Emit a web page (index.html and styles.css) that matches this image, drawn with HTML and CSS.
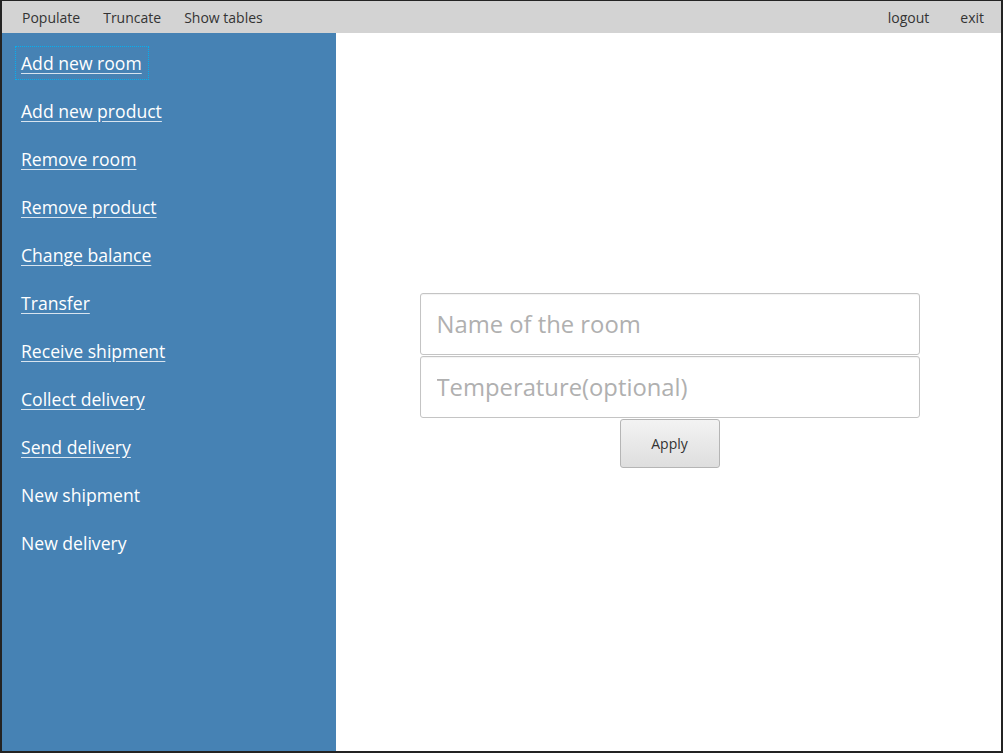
FILE: index.html
```html
<!DOCTYPE html>
<html>
<head>
<meta charset="utf-8">
<link rel="stylesheet" href="styles.css">
</head>
<body>
<div class="window">
  <div class="topbar">
    <div class="menu-left">
      <span class="menu-item">Populate</span>
      <span class="menu-item">Truncate</span>
      <span class="menu-item">Show tables</span>
    </div>
    <div class="menu-right">
      <span class="menu-item">logout</span>
      <span class="menu-item">exit</span>
    </div>
  </div>
  <div class="main">
    <nav class="sidebar">
      <a class="link focused">Add new room</a>
      <a class="link">Add new product</a>
      <a class="link">Remove room</a>
      <a class="link">Remove product</a>
      <a class="link">Change balance</a>
      <a class="link">Transfer</a>
      <a class="link">Receive shipment</a>
      <a class="link">Collect delivery</a>
      <a class="link">Send delivery</a>
      <span class="link plain">New shipment</span>
      <span class="link plain">New delivery</span>
    </nav>
    <section class="content">
      <div class="form">
        <input class="field" type="text" placeholder="Name of the room">
        <input class="field" type="text" placeholder="Temperature(optional)">
        <button class="apply">Apply</button>
      </div>
    </section>
  </div>
</div>
</body>
</html>
```
FILE: styles.css
```css
html, body {
  margin: 0;
  padding: 0;
  height: 100%;
  background: #232323;
  font-family: "Open Sans", "Noto Sans", sans-serif;
}

.window {
  box-sizing: border-box;
  margin: 1px 2px 0 2px;
  height: 750px;
  display: flex;
  flex-direction: column;
  background: #fff;
}

.topbar {
  height: 32px;
  flex: none;
  background: #d3d3d3;
  display: flex;
  justify-content: space-between;
  align-items: center;
  font-size: 14px;
  color: #333;
}

.menu-left {
  display: flex;
  gap: 23px;
  padding-left: 20px;
}

.menu-right {
  display: flex;
  gap: 31px;
  padding-right: 17px;
}

.main {
  flex: 1;
  display: flex;
  min-height: 0;
}

.sidebar {
  width: 334px;
  flex: none;
  background: #4682b4;
  display: flex;
  flex-direction: column;
  align-items: flex-start;
  gap: 14px;
  padding: 13px 0 0 13px;
  box-sizing: border-box;
}

.link {
  display: block;
  height: 34px;
  line-height: 33px;
  padding: 0 6px 0 5px;
  border: 1px dotted transparent;
  box-sizing: border-box;
  color: #fff;
  font-size: 17.6px;
  text-decoration: underline;
  text-decoration-color: #d8e4ef;
  text-underline-offset: 3px;
  cursor: pointer;
}

.link.focused {
  border-color: #05b0ef;
}

.link.plain {
  text-decoration: none;
}

.content {
  flex: 1;
  display: flex;
  justify-content: center;
  padding-top: 260px;
  padding-left: 2px;
}

.form {
  width: 500px;
  display: flex;
  flex-direction: column;
  align-items: center;
  gap: 1px;
}

.field {
  width: 500px;
  height: 62px;
  box-sizing: border-box;
  border: 1px solid #c4c4c4;
  border-radius: 3px;
  padding: 0 16px;
  font-family: inherit;
  font-size: 23.8px;
  color: #333;
  background: #fff;
  box-shadow: inset 0 1px 1px rgba(0,0,0,0.05);
  outline: none;
}

.field::placeholder {
  color: #b0b0b0;
}

.apply {
  width: 100px;
  height: 49px;
  box-sizing: border-box;
  border: 1px solid #b5b5b5;
  border-radius: 3px;
  background: linear-gradient(#f3f3f3, #dedede);
  font-family: inherit;
  font-size: 14px;
  color: #333;
}
```
